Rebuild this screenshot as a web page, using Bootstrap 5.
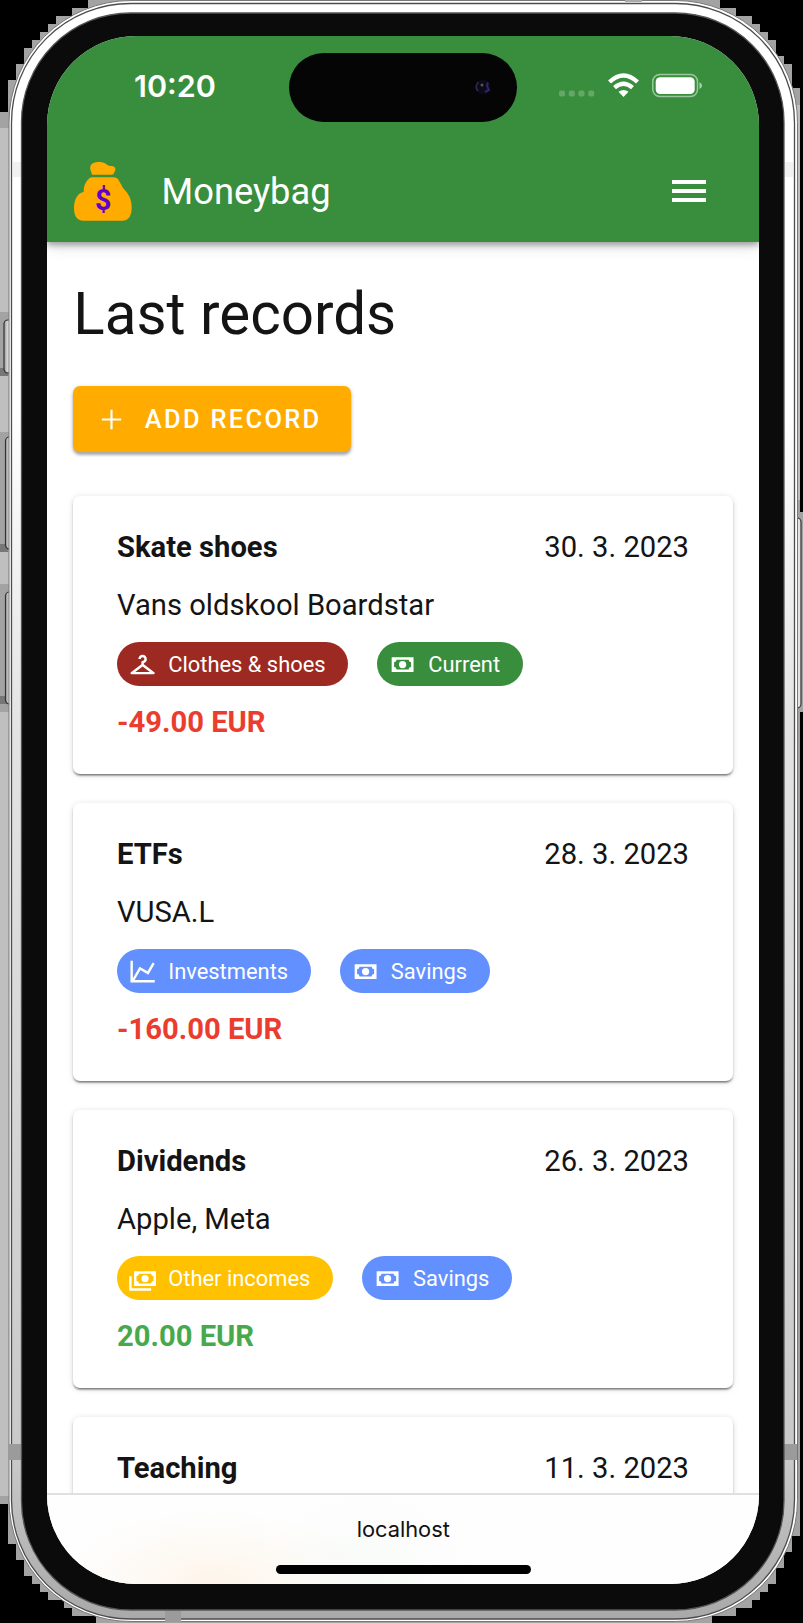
<!DOCTYPE html>
<html lang="en">
<head>
<meta charset="utf-8">
<meta name="viewport" content="width=device-width, initial-scale=1">
<title>Moneybag</title>
<link href="https://cdn.jsdelivr.net/npm/bootstrap@5.3.0/dist/css/bootstrap.min.css" rel="stylesheet">
<style>
  body { background:#000; font-family:Roboto,"Liberation Sans",sans-serif; color:#141414; }
  .phone { width:803px; height:1623px; padding:36px 44.5px 39px 47px; }
  .shell { left:0; top:0; }
  .screen { border-radius:89px; background:#fff; isolation:isolate; }
  .topbar { height:206px; background:#388e3c; color:#fff; box-shadow:0 3px 6px rgba(0,0,0,.32),0 5px 14px rgba(0,0,0,.12); z-index:2; }
  .statusbar { height:104px; padding:16.5px 56px 0 87px; }
  .clock { font:600 30.5px/68px Inter,sans-serif; width:155px; margin-right:.8px; margin-top:-1px; }
  .island { width:229px; height:69.5px; border-radius:35px; background:#050505; padding-right:25px; }
  .status-icons { margin-left:40.5px; height:67px; margin-top:-.5px; }
  .appbar { height:102px; padding:0 53px 0 26.5px; }
  .brand { font-size:36.3px; line-height:48px; margin-left:30px; padding-top:2px; }
  .content { padding:41.5px 25.5px 0 26.3px; min-height:0; }
  .headline { font-size:58.3px; line-height:60px; font-weight:400; margin:0 0 42.5px; }
  .btn-add { --bs-btn-bg:#ffab00; --bs-btn-color:#fff; height:66px; width:278px; border:0; border-radius:7px; padding:0 0 0 24px; font-size:25.5px; font-weight:500; letter-spacing:2.28px; box-shadow:0 3px 3px rgba(0,0,0,.28),0 1px 5px rgba(0,0,0,.16); margin-bottom:44px; }
  .add-label { margin-left:18.5px; }
  .record { height:278px; flex:none; margin-bottom:29px; border:0; border-radius:7px; padding:21.5px 44px 0 43.7px; font-size:29.2px; box-shadow:0 3px 2px -2px rgba(0,0,0,.35),0 2px 2px rgba(0,0,0,.24),0 1px 6px rgba(0,0,0,.14); color:#141414; }
  .line { height:58px; line-height:58px; white-space:nowrap; }
  .line + .line { padding-top:.5px; }
  .chips { gap:29px; margin:8.5px 0 7px; }
  .chip { height:44px; border-radius:22px; font-size:21.9px; line-height:46px; color:#fff; padding:1px 22.5px 0 11px; gap:11px; white-space:nowrap; }
  .chip svg { width:29.2px; height:29.2px; flex:none; }
  .c-red { background:#9d2a22; } .c-green { background:#388e3c; } .c-blue { background:#6290ff; } .c-amber { background:#ffc100; }
  .minus { color:#ea3d2f; } .plus { color:#47a94b; }
  .urlbar { height:91px; flex:none; border-top:2px solid #dfe1e0; background:radial-gradient(ellipse 150px 75px at 165px 100%,#fdf5ea,rgba(253,245,234,0)),radial-gradient(ellipse 110px 90px at 320px 90%,#f8fbf8,rgba(248,251,248,0)),#fefefe; z-index:3; font:400 21.8px/30px Inter,sans-serif; color:#111; padding:18.5px 0 0 1px; }
  .homebar { width:255px; height:9px; border-radius:5px; background:#000; margin-top:21px; }
</style>
</head>
<body>
<svg width="0" height="0" class="position-absolute">
  <symbol id="cash" viewBox="0 0 24 24"><path fill="currentColor" d="M3,6H21V18H3V6M12,9A3,3 0 0,1 15,12A3,3 0 0,1 12,15A3,3 0 0,1 9,12A3,3 0 0,1 12,9M7,8A2,2 0 0,1 5,10V14A2,2 0 0,1 7,16H17A2,2 0 0,1 19,14V10A2,2 0 0,1 17,8H7Z"/></symbol>
  <symbol id="cashes" viewBox="0 0 24 24"><path fill="currentColor" d="M5,6H23V18H5V6M14,9A3,3 0 0,1 17,12A3,3 0 0,1 14,15A3,3 0 0,1 11,12A3,3 0 0,1 14,9M9,8A2,2 0 0,1 7,10V14A2,2 0 0,1 9,16H19A2,2 0 0,1 21,14V10A2,2 0 0,1 19,8H9M1,10H3V20H19V22H1V10Z"/></symbol>
  <symbol id="hanger" viewBox="0 0 24 24"><path fill="currentColor" d="M12 4A3.5 3.5 0 0 0 8.5 7.5H10.5A1.5 1.5 0 0 1 12 6A1.5 1.5 0 0 1 13.5 7.5A1.5 1.5 0 0 1 12 9C11.45 9 11 9.45 11 10V11.75L2.4 18.2A1 1 0 0 0 3 20H21A1 1 0 0 0 21.6 18.2L13 11.75V10.85A3.5 3.5 0 0 0 15.5 7.5A3.5 3.5 0 0 0 12 4M12 13.5L18 18H6L12 13.5Z"/></symbol>
  <symbol id="chart" viewBox="0 0 24 24"><path fill="currentColor" d="M16,11.78L20.24,4.45L21.97,5.45L16.74,14.5L10.23,10.75L5.46,19H22V21H2V3H4V17.54L9.5,8L16,11.78Z"/></symbol>
</svg>

<div class="phone position-relative overflow-hidden">
  <!-- phone body, side buttons and stepped shadow -->
  <svg class="shell position-absolute" width="803" height="1623" viewBox="0 0 803 1623">
    <defs>
      <linearGradient id="steel" x1="0" y1="0" x2="0" y2="1"><stop offset="0" stop-color="#fff"/><stop offset=".25" stop-color="#fff"/><stop offset=".45" stop-color="#e3e3e3"/><stop offset=".9" stop-color="#c9c9c9"/><stop offset="1" stop-color="#a9a9a9"/></linearGradient>
      <linearGradient id="key"><stop offset="0" stop-color="#999"/><stop offset=".5" stop-color="#eee"/><stop offset="1" stop-color="#ddd"/></linearGradient>
    </defs>
    <path fill="#a3a3a3" d="M88 0H720V8H736V16H752V24H760V32H768V40H776V56H784V64H792V88H800V512H803V712H800V1536H792V1552H784V1568H776V1584H768V1592H760V1600H752V1608H736V1616H712V1623H96V1616H72V1608H64V1600H48V1592H40V1584H32V1576H24V1560H16V1544H8V1504H0V112H8V80H16V64H24V48H32V40H40V32H48V24H56V16H72V8H88Z"/>
    <path fill="#bfbfbf" d="M0 128H10V312H0ZM0 376H10V432H0ZM0 552H10V584H0ZM0 712H10V1496H0ZM797 105H800V500H797Z"/>
    <path fill="#777" d="M0 368H8V376H0ZM0 544H8V552H0ZM0 696H8V704H0Z"/>
    <g fill="url(#key)" stroke="#333" stroke-width="1.2">
      <rect x="4" y="320" width="10" height="53" rx="4"/><rect x="5.500" y="437" width="10" height="112" rx="4"/><rect x="5.500" y="592" width="10" height="112" rx="4"/><rect x="790" y="518" width="11" height="190" rx="4"/>
    </g>
    <rect x="9" y=".5" width="788.500" height="1621" rx="122" fill="#fff" stroke="#777"/>
    <rect x="11.500" y="3.500" width="783" height="1615.500" rx="119" fill="url(#steel)" stroke="#4c4c4c" stroke-width="1.300"/>
    <path fill="#9b9b9b" d="M9 1444H21V1460H9ZM784 1444H797V1460H784ZM165 1610H181V1622H165Z"/>
    <path fill="#aaa" d="M625 0H642V2H625Z"/>
    <path fill="#f1f1f1" d="M13 162H21V177H13ZM785 162H793V177H785Z"/>
    <rect x="21.500" y="13" width="762.500" height="1597" rx="109" fill="#0b0b0b" stroke="#555" stroke-width="1.300"/>
  </svg>

  <div class="screen position-relative h-100 d-flex flex-column overflow-hidden">
    <header class="topbar position-relative flex-shrink-0">
      <div class="statusbar d-flex align-items-start">
        <div class="clock">10:20</div>
        <div class="island d-flex align-items-center justify-content-end">
          <svg width="18" height="18" viewBox="0 0 18 18"><circle cx="9" cy="9" r="7.500" fill="#0b0a18"/><path d="M4.500 4Q0 9 4 13" stroke="#2b2b48" stroke-width="1.800" fill="none"/><path d="M14 4.500Q12 8 15 12L11 14" stroke="#33246f" stroke-width="2" fill="none"/><circle cx="8" cy="7" r="1.500" fill="#55555f"/></svg>
        </div>
        <div class="status-icons d-flex align-items-center">
          <svg width="145" height="26" viewBox="0 0 145 26">
            <g fill="#fff" opacity=".22"><rect x="1" y="17.500" width="6" height="6" rx="1.800"/><rect x="10.800" y="17.500" width="6" height="6" rx="1.800"/><rect x="20.500" y="17.500" width="6" height="6" rx="1.800"/><rect x="30.200" y="17.500" width="6" height="6" rx="1.800"/></g>
            <g fill="none" stroke="#fff" stroke-width="4.300"><path d="M51.500 9Q65.500-4 79.500 9"/><path d="M56.500 14.700Q65.500 6.800 74.500 14.700"/></g>
            <path d="M60.500 18.800Q65.500 15 70.500 18.800L65.500 24Z" fill="#fff"/>
            <rect x="94.800" y="1.400" width="44.700" height="22.200" rx="7" fill="none" stroke="#fff" stroke-opacity=".5" stroke-width="1.500"/>
            <rect x="97.700" y="4.200" width="39" height="16.800" rx="4.500" fill="#fff"/>
            <path d="M141.500 9Q144 10.500 144 12.500Q144 14.500 141.500 16Z" fill="#fff" opacity=".6"/>
          </svg>
        </div>
      </div>
      <nav class="appbar d-flex align-items-center">
        <svg width="58" height="59" viewBox="0 0 174 177">
          <path fill="#ffab00" d="M54 38L49 22C46 5 60 0 78 0C95 0 99 12 110 12C121 12 126 18 124 25L119 35Q117 38 113 38ZM54 46H118Q129 46 135 56C146 74 142 72 155 87C167 102 173 116 173 137C173 162 163 176 145 176H28C9 176 0 161 0 137C0 112 12 92 29 90C29 73 34 60 46 49Q49 46 54 46Z"/>
          <text x="88" y="145" text-anchor="middle" font-family="Roboto,sans-serif" font-weight="700" font-size="86" fill="#6200d0">$</text>
        </svg>
        <span class="brand">Moneybag</span>
        <svg class="ms-auto" width="34" height="24" viewBox="0 0 34 24" fill="#fff"><path d="M0 1H34V5H0ZM0 10H34V14H0ZM0 19H34V23H0Z"/></svg>
      </nav>
    </header>

    <main class="content flex-grow-1 overflow-hidden d-flex flex-column">
      <h1 class="headline">Last records</h1>
      <button class="btn btn-add d-flex align-items-center flex-shrink-0" type="button">
        <svg width="29" height="29" viewBox="0 0 24 24"><path fill="#fff" d="M20,12.900H12.900V20H11.100V12.900H4V11.100H11.100V4H12.900V11.100H20Z"/></svg>
        <span class="add-label">ADD RECORD</span>
      </button>

      <article class="card record">
        <div class="line d-flex justify-content-between"><strong>Skate shoes</strong><span>30. 3. 2023</span></div>
        <div class="line">Vans oldskool Boardstar</div>
        <div class="chips d-flex">
          <span class="chip c-red d-flex align-items-center"><svg><use href="#hanger"/></svg>Clothes &amp; shoes</span>
          <span class="chip c-green d-flex align-items-center"><svg><use href="#cash"/></svg>Current</span>
        </div>
        <div class="line fw-bold minus">-49.00 EUR</div>
      </article>
      <article class="card record">
        <div class="line d-flex justify-content-between"><strong>ETFs</strong><span>28. 3. 2023</span></div>
        <div class="line">VUSA.L</div>
        <div class="chips d-flex">
          <span class="chip c-blue d-flex align-items-center"><svg><use href="#chart"/></svg>Investments</span>
          <span class="chip c-blue d-flex align-items-center"><svg><use href="#cash"/></svg>Savings</span>
        </div>
        <div class="line fw-bold minus">-160.00 EUR</div>
      </article>
      <article class="card record">
        <div class="line d-flex justify-content-between"><strong>Dividends</strong><span>26. 3. 2023</span></div>
        <div class="line">Apple, Meta</div>
        <div class="chips d-flex">
          <span class="chip c-amber d-flex align-items-center"><svg><use href="#cashes"/></svg>Other incomes</span>
          <span class="chip c-blue d-flex align-items-center"><svg><use href="#cash"/></svg>Savings</span>
        </div>
        <div class="line fw-bold plus">20.00 EUR</div>
      </article>
      <article class="card record">
        <div class="line d-flex justify-content-between"><strong>Teaching</strong><span>11. 3. 2023</span></div>
      </article>
    </main>

    <footer class="urlbar d-flex flex-column align-items-center">
      <span>localhost</span>
      <div class="homebar"></div>
    </footer>
  </div>
</div>
<script src="https://cdn.jsdelivr.net/npm/bootstrap@5.3.0/dist/js/bootstrap.bundle.min.js"></script>
</body>
</html>
